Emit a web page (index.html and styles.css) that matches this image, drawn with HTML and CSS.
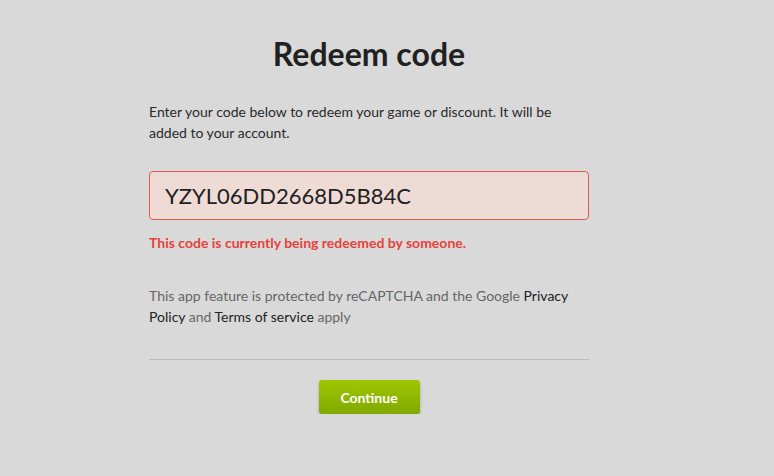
FILE: index.html
```html
<!DOCTYPE html>
<html>
<head>
<meta charset="utf-8">
<link rel="stylesheet" href="styles.css">
</head>
<body>
<main class="panel">
  <h1 class="title">Redeem code</h1>
  <p class="intro">Enter your code below to redeem your game or discount. It will be added to your account.</p>
  <div class="field field--error">
    <input class="field__input" type="text" value="YZYL06DD2668D5B84C">
  </div>
  <p class="error">This code is currently being redeemed by someone.</p>
  <p class="notice">This app feature is protected by reCAPTCHA and the Google <a class="link" href="#">Privacy Policy</a> and <a class="link" href="#">Terms of service</a> apply</p>
  <hr class="divider">
  <div class="actions">
    <button class="btn" type="button">Continue</button>
  </div>
</main>
</body>
</html>
```
FILE: styles.css
```css
html, body {
  margin: 0;
  padding: 0;
  background: #d9d9d9;
  font-family: Lato, "Open Sans", sans-serif;
  color: #212121;
}
body {
  padding-right: 36px;
}
.panel {
  width: 440px;
  margin: 0 auto;
  padding-top: 35px;
  box-sizing: border-box;
}
.title {
  margin: 0;
  text-align: center;
  font-size: 32px;
  font-weight: 700;
  line-height: 38px;
  color: #212121;
}
.intro {
  margin: 28px 0 0;
  font-size: 14px;
  line-height: 21px;
  color: #2a2a2a;
}
.field {
  margin-top: 28px;
}
.field__input {
  display: block;
  width: 100%;
  box-sizing: border-box;
  height: 49px;
  padding: 0 15px;
  border: 1px solid #e5584e;
  border-radius: 4px;
  background: #efdbd5;
  font-family: Lato, sans-serif;
  font-size: 22px;
  color: #212121;
  outline: none;
}
.error {
  margin: 14px 0 0;
  font-size: 14px;
  font-weight: 700;
  line-height: 18px;
  color: #e8403a;
}
.notice {
  margin: 33px 0 0;
  font-size: 14px;
  line-height: 21px;
  color: #666;
}
.link {
  color: #222;
  text-decoration: none;
}
.divider {
  margin: 32px 0 0;
  border: 0;
  border-top: 1px solid #bcbcbc;
}
.actions {
  display: flex;
  justify-content: center;
  margin-top: 20px;
}
.btn {
  width: 101px;
  height: 34px;
  border: 0;
  border-radius: 3px;
  background: linear-gradient(#a0c600, #80a900);
  box-shadow: 0 2px 3px rgba(0,0,0,0.25);
  color: #fff;
  font-family: Lato, sans-serif;
  font-weight: 700;
  font-size: 14px;
}
```
